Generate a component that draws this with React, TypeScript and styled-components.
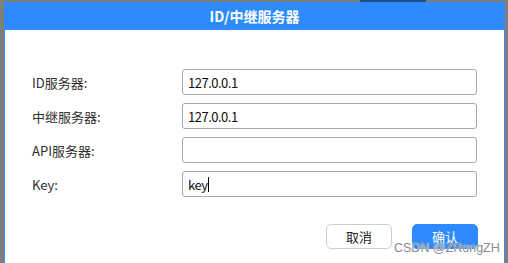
import React from 'react';
import styled, { createGlobalStyle } from 'styled-components';

const GlobalStyle = createGlobalStyle`
  html, body {
    margin: 0;
    padding: 0;
    background: #7e7e7e;
    overflow: hidden;
  }
`;

interface FieldRow {
  label: string;
  value: string;
  focused?: boolean;
}

const rows: FieldRow[] = [
  { label: 'ID服务器:', value: '127.0.0.1' },
  { label: '中继服务器:', value: '127.0.0.1' },
  { label: 'API服务器:', value: '' },
  { label: 'Key:', value: 'key', focused: true },
];

const App: React.FC = () => {
  return (
    <Screen>
      <GlobalStyle />
      <TopStrip>
        <TaskSlot />
      </TopStrip>
      <Dialog>
        <Header>ID/中继服务器</Header>
        <Body>
          <Form>
            {rows.map((row) => (
              <React.Fragment key={row.label}>
                <Label>{row.label}</Label>
                <TextBox>
                  <span>{row.value}</span>
                  {row.focused && <Caret />}
                </TextBox>
              </React.Fragment>
            ))}
          </Form>
          <Footer>
            <Button>取消</Button>
            <Button primary>确认</Button>
          </Footer>
        </Body>
      </Dialog>
      <Watermark>CSDN @ZRongZH</Watermark>
    </Screen>
  );
};

export default App;

const Screen = styled.div`
  position: relative;
  width: 508px;
  height: 263px;
  padding-left: 4px;
  box-sizing: border-box;
  font-family: 'Noto Sans CJK SC', 'Noto Sans', sans-serif;
`;

const TopStrip = styled.div`
  height: 2px;
  display: flex;
`;

const TaskSlot = styled.div`
  margin-left: 356px;
  width: 66px;
  background: #1d4f8e;
`;

const Dialog = styled.div`
  width: 501px;
  height: 270px;
  background: #ffffff;
  border: 1px solid #2e8bff;
  border-top: none;
  box-sizing: border-box;
`;

const Header = styled.div`
  height: 28px;
  margin: 0 -1px;
  background: #2e8bff;
  color: #ffffff;
  font-size: 14px;
  font-weight: 700;
  display: flex;
  align-items: center;
  justify-content: center;
`;

const Body = styled.div`
  padding: 39px 26px 0 27px;
`;

const Form = styled.div`
  display: grid;
  grid-template-columns: 150px 295px;
  row-gap: 8px;
  align-items: center;
`;

const Label = styled.div`
  font-size: 13px;
  color: #2e2e2e;
`;

const TextBox = styled.div`
  height: 26px;
  box-sizing: border-box;
  border: 1px solid #a9a9ad;
  border-radius: 3px;
  padding: 0 5px;
  display: flex;
  align-items: center;
  font-size: 13px;
  letter-spacing: -0.5px;
  color: #0d0d0d;
`;

const Caret = styled.span`
  display: inline-block;
  width: 1px;
  height: 15px;
  margin-left: 1px;
  background: #000000;
`;

const Footer = styled.div`
  display: flex;
  justify-content: flex-end;
  gap: 20px;
  margin-top: 27px;
`;

const Button = styled.button<{ primary?: boolean }>`
  width: 66px;
  height: 25px;
  box-sizing: border-box;
  border-radius: 5px;
  border: 1px solid ${({ primary }) => (primary ? '#2e8bff' : '#cfcfcf')};
  background: ${({ primary }) => (primary ? '#2e8bff' : '#ffffff')};
  color: ${({ primary }) => (primary ? '#ffffff' : '#222222')};
  font-family: inherit;
  font-size: 13px;
  padding: 0;
`;

const Watermark = styled.div`
  position: absolute;
  z-index: 2;
  left: 394px;
  top: 241px;
  font-family: 'Liberation Sans', Arial, sans-serif;
  font-size: 12.5px;
  color: #8a8a8a;
  text-shadow: 0 0 1px rgba(255, 255, 255, 0.9), 0 0 1px rgba(255, 255, 255, 0.9);
  pointer-events: none;
`;
